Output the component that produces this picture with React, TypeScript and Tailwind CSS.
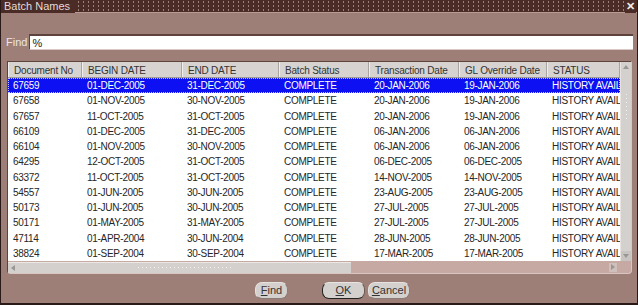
const cols = [
  { label: 'Document No', w: 'w-[74px]' },
  { label: 'BEGIN DATE', w: 'w-[100px]' },
  { label: 'END DATE', w: 'w-[97px]' },
  { label: 'Batch Status', w: 'w-[90px]' },
  { label: 'Transaction Date', w: 'w-[90px]' },
  { label: 'GL Override Date', w: 'w-[88px]' },
  { label: 'STATUS', w: 'w-[73px]' },
]

const rows = [
  ['67659', '01-DEC-2005', '31-DEC-2005', 'COMPLETE', '20-JAN-2006', '19-JAN-2006', 'HISTORY AVAIL'],
  ['67658', '01-NOV-2005', '30-NOV-2005', 'COMPLETE', '20-JAN-2006', '19-JAN-2006', 'HISTORY AVAIL'],
  ['67657', '11-OCT-2005', '31-OCT-2005', 'COMPLETE', '20-JAN-2006', '19-JAN-2006', 'HISTORY AVAIL'],
  ['66109', '01-DEC-2005', '31-DEC-2005', 'COMPLETE', '06-JAN-2006', '06-JAN-2006', 'HISTORY AVAIL'],
  ['66104', '01-NOV-2005', '30-NOV-2005', 'COMPLETE', '06-JAN-2006', '06-JAN-2006', 'HISTORY AVAIL'],
  ['64295', '12-OCT-2005', '31-OCT-2005', 'COMPLETE', '06-DEC-2005', '06-DEC-2005', 'HISTORY AVAIL'],
  ['63372', '11-OCT-2005', '31-OCT-2005', 'COMPLETE', '14-NOV-2005', '14-NOV-2005', 'HISTORY AVAIL'],
  ['54557', '01-JUN-2005', '30-JUN-2005', 'COMPLETE', '23-AUG-2005', '23-AUG-2005', 'HISTORY AVAIL'],
  ['50173', '01-JUN-2005', '30-JUN-2005', 'COMPLETE', '27-JUL-2005', '27-JUL-2005', 'HISTORY AVAIL'],
  ['50171', '01-MAY-2005', '31-MAY-2005', 'COMPLETE', '27-JUL-2005', '27-JUL-2005', 'HISTORY AVAIL'],
  ['47114', '01-APR-2004', '30-JUN-2004', 'COMPLETE', '28-JUN-2005', '28-JUN-2005', 'HISTORY AVAIL'],
  ['38824', '01-SEP-2004', '30-SEP-2004', 'COMPLETE', '17-MAR-2005', '17-MAR-2005', 'HISTORY AVAIL'],
]

function Arrow({ dir }: { dir: 'up' | 'down' | 'left' | 'right' }) {
  const pts = {
    up: '1,6 4,2 7,6',
    down: '1,2 4,6 7,2',
    left: '6,1 2,4 6,7',
    right: '2,1 6,4 2,7',
  }[dir]
  return (
    <svg width="8" height="8" viewBox="0 0 8 8">
      <polygon points={pts} fill="#9a9694" />
    </svg>
  )
}

function Btn({ first, rest, def, w }: { first: string; rest: string; def?: boolean; w: string }) {
  return (
    <div
      className={`${w} h-[17px] rounded-[7px] bg-[#d3d0cd] flex items-center justify-center text-[11px] text-[#333] ${
        def ? 'border border-[#222] border-t-[#e8e4e2] border-r-[#6a5a56]' : 'border border-[#e6e2e0] border-b-[#8c7a76] border-r-[#8c7a76]'
      }`}
    >
      <span>
        <span className="underline">{first}</span>
        {rest}
      </span>
    </div>
  )
}

export default function App() {
  return (
    <div
      className="w-[638px] h-[305px] bg-[#9d7f78] flex flex-col border-l border-r border-b-2 border-[#2a1a17] overflow-hidden"
      style={{ fontFamily: '"Liberation Sans", Arial, sans-serif' }}
    >
      {/* title bar */}
      <div className="h-[13px] flex items-center bg-[#4a2b26] bg-[radial-gradient(circle,#a0807a_0.7px,transparent_1.1px)] bg-[length:5px_4px] border-b border-[#b89a93]">
        <span className="bg-[#4a2b26] pl-[3px] pr-[5px] text-[11px] leading-[13px] text-[#e4dad8]">Batch Names</span>
        <div className="flex-1" />
        <span className="bg-[#4a2b26] px-[1px] text-[11px] leading-[13px] font-bold text-[#eeeae8] mr-[1px]">✕</span>
      </div>

      {/* find field */}
      <div className="flex items-center mt-[21px] pl-[5px] gap-[2px]">
        <span className="text-[11px] text-[#ece6e4]">Find</span>
        <div className="w-[604px] h-[16px] bg-white border-t-2 border-l border-[#5e423c] border-b border-b-[#d9c8c4] flex items-center pl-[2px] text-[11px] text-[#222]">
          %
        </div>
      </div>

      {/* table panel */}
      <div className="ml-[6px] mt-[10px] w-[625px] h-[213px] bg-[#c6a9a3] border border-[#5e423c] border-b-[#d8c4c0] border-r-[#d8c4c0] rounded-b-[4px] flex flex-col">
        <div className="flex">
          <div className="w-[612px] bg-white">
            <div className="flex h-[16px] bg-[#d6d3d0] border-b border-[#9e9a98]">
              {cols.map((c) => (
                <div
                  key={c.label}
                  className={`${c.w} shrink-0 pl-[5px] text-[10px] tracking-[-0.2px] leading-[17px] text-[#333] whitespace-nowrap overflow-hidden border-r border-[#a8a4a2] border-l border-l-[#f0eeec]`}
                >
                  {c.label}
                </div>
              ))}
            </div>
            {rows.map((r, i) => (
              <div
                key={r[0]}
                className={`flex h-[15.25px] items-center pt-[1px] ${
                  i === 0 ? 'bg-[#0c10f2] text-white outline-1 outline-dotted outline-[#c8c8ff] -outline-offset-1' : 'text-[#262626]'
                }`}
              >
                {r.map((v, j) => (
                  <div key={j} className={`${cols[j].w} shrink-0 pl-[5px] text-[10px] tracking-[-0.3px] whitespace-nowrap overflow-hidden`}>
                    {v}
                  </div>
                ))}
              </div>
            ))}
          </div>
          {/* vertical scrollbar */}
          <div className="w-[11px] h-[199px] bg-[#d4d0ce] flex flex-col items-center border-l border-[#e8e4e2]">
            <div className="h-[10px] flex items-center"><Arrow dir="up" /></div>
            <div className="flex-1 w-full flex flex-col items-center pt-[22px] gap-[3px]">
              {Array.from({ length: 7 }).map((_, i) => (
                <div key={i} className="w-[1px] h-[1px] bg-[#f4f2f0]" />
              ))}
            </div>
            <div className="h-[10px] flex items-center bg-[#c8c4c2] w-full justify-center"><Arrow dir="down" /></div>
          </div>
        </div>
        {/* horizontal scrollbar */}
        <div className="flex h-[11px] mt-[1px]">
          <div className="w-[343px] bg-[#d4d0ce] flex items-center border-t border-[#ece8e6]">
            <div className="w-[10px] flex justify-center"><Arrow dir="left" /></div>
            <div className="flex-1 flex justify-center items-center gap-[3px]">
              {Array.from({ length: 24 }).map((_, i) => (
                <div key={i} className="w-[1px] h-[1px] bg-[#f4f2f0]" />
              ))}
            </div>
          </div>
          <div className="flex-1 flex justify-end items-center pr-[3px]">
            <div className="w-[8px] h-[9px] bg-[#d0c0bc] flex items-center justify-center"><Arrow dir="right" /></div>
          </div>
          <div className="w-[11px]" />
        </div>
      </div>

      {/* buttons */}
      <div className="flex mt-[8px] pl-[254px]">
        <Btn first="F" rest="ind" w="w-[33px]" />
        <div className="w-[34px]" />
        <Btn first="O" rest="K" def w="w-[43px]" />
        <div className="w-[3px]" />
        <Btn first="C" rest="ancel" w="w-[42px]" />
      </div>
    </div>
  )
}
